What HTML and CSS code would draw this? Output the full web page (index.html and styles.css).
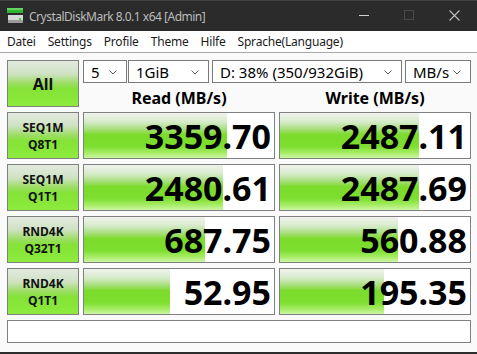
FILE: index.html
```html
<!DOCTYPE html>
<html lang="de">
  <head>
    <meta charset="UTF-8" />
    <meta name="viewport" content="width=device-width, initial-scale=1.0" />
    <title>CrystalDiskMark 8.0.1 x64 [Admin]</title>
    <link rel="stylesheet" href="styles.css">
  </head>

  <body>
    <div class="window">
      <div class="titlebar">
        <svg class="app-icon" width="16" height="17" viewBox="0 0 16 17">
          <rect x="0" y="1" width="16" height="5" fill="#2fb52f" />
          <rect x="0" y="1" width="16" height="2" fill="#5fd65f" />
          <rect x="1" y="8" width="15" height="8" fill="#d8d8d8" />
          <rect x="1" y="13" width="15" height="3" fill="#9a9a9a" />
          <rect x="12" y="11" width="2" height="2" fill="#3fcf3f" />
        </svg>
        <span class="title">CrystalDiskMark 8.0.1 x64 [Admin]</span>
        <div class="caption">
          <span class="cap-btn">
            <svg width="11" height="11" viewBox="0 0 11 11"><line x1="0" y1="5.5" x2="10" y2="5.5" stroke="#cfcfcf" stroke-width="1" /></svg>
          </span>
          <span class="cap-btn">
            <svg width="11" height="11" viewBox="0 0 11 11"><rect x="0.5" y="0.5" width="9" height="9" fill="none" stroke="#6a6a6a" stroke-width="1" stroke-dasharray="1 1" /></svg>
          </span>
          <span class="cap-btn">
            <svg width="11" height="11" viewBox="0 0 11 11"><path d="M0.5 0.5 L10.5 10.5 M10.5 0.5 L0.5 10.5" stroke="#bdbdbd" stroke-width="1.1" /></svg>
          </span>
        </div>
      </div>

      <div class="menubar">
        <span class="menu-item">Datei</span>
        <span class="menu-item">Settings</span>
        <span class="menu-item">Profile</span>
        <span class="menu-item">Theme</span>
        <span class="menu-item">Hilfe</span>
        <span class="menu-item">Sprache(Language)</span>
      </div>

      <div class="main">
        <div class="top">
          <div class="test-btn all">All</div>
          <div class="selects">
            <div class="combo count">5<svg class="chev" width="8" height="5" viewBox="0 0 8 5"><polyline points="0.5,0.5 4,4 7.5,0.5" fill="none" stroke="#606060" stroke-width="1" /></svg></div>
            <div class="combo size">1GiB<svg class="chev" width="8" height="5" viewBox="0 0 8 5"><polyline points="0.5,0.5 4,4 7.5,0.5" fill="none" stroke="#606060" stroke-width="1" /></svg></div>
            <div class="combo drive">D: 38% (350/932GiB)<svg class="chev" width="8" height="5" viewBox="0 0 8 5"><polyline points="0.5,0.5 4,4 7.5,0.5" fill="none" stroke="#606060" stroke-width="1" /></svg></div>
            <div class="combo unit">MB/s<svg class="chev" width="8" height="5" viewBox="0 0 8 5"><polyline points="0.5,0.5 4,4 7.5,0.5" fill="none" stroke="#606060" stroke-width="1" /></svg></div>
          </div>
          <div class="head">Read (MB/s)</div>
          <div class="head">Write (MB/s)</div>
        </div>

        <div class="results">
          <div class="test-btn">SEQ1M<br>Q8T1</div>
          <div class="value"><div class="bar" style="width: 143px"></div><span>3359.70</span></div>
          <div class="value"><div class="bar" style="width: 139px"></div><span>2487.11</span></div>

          <div class="test-btn">SEQ1M<br>Q1T1</div>
          <div class="value"><div class="bar" style="width: 139px"></div><span>2480.61</span></div>
          <div class="value"><div class="bar" style="width: 139px"></div><span>2487.69</span></div>

          <div class="test-btn">RND4K<br>Q32T1</div>
          <div class="value"><div class="bar" style="width: 121px"></div><span>687.75</span></div>
          <div class="value"><div class="bar" style="width: 118px"></div><span>560.88</span></div>

          <div class="test-btn">RND4K<br>Q1T1</div>
          <div class="value"><div class="bar" style="width: 86px"></div><span>52.95</span></div>
          <div class="value"><div class="bar" style="width: 104px"></div><span>195.35</span></div>

          <div class="comment"></div>
        </div>
      </div>
    </div>
  </body>
</html>
```

FILE: styles.css
```css
* {
  padding: 0;
  margin: 0;
  box-sizing: border-box;
}

body {
  width: 477px;
  height: 354px;
  overflow: hidden;
  font-family: "Noto Sans", "DejaVu Sans", sans-serif;
  background: #2b2b2b;
}

.window {
  width: 477px;
  height: 354px;
  display: flex;
  flex-direction: column;
  border-bottom: 2px solid #2d2d2d;
}

/* title bar */
.titlebar {
  height: 31px;
  background: #2b2b2b;
  border-top: 1px solid #404040;
  display: flex;
  align-items: center;
}

.app-icon {
  margin-left: 7px;
  margin-top: -2px;
}

.title {
  margin-left: 6px;
  font-size: 12px;
  color: #bcbcbc;
  letter-spacing: -0.5px;
}

.caption {
  margin-left: auto;
  display: flex;
  height: 100%;
}

.cap-btn {
  width: 45px;
  display: flex;
  justify-content: center;
  align-items: center;
  margin-top: -2px;
}

/* menu */
.menubar {
  height: 22px;
  background: #ffffff;
  border-bottom: 1px solid #a8a8a8;
  display: flex;
  align-items: center;
  padding-left: 1px;
}

.menu-item {
  font-size: 12px;
  color: #1a1a1a;
  padding: 0 6px;
  letter-spacing: -0.2px;
}

/* main area */
.main {
  flex: 1;
  background: #fafafa;
  padding: 7px 0 0 7px;
}

.top {
  display: grid;
  grid-template-columns: 72px 192px 192px;
  grid-template-rows: 23px 24px;
  column-gap: 4px;
}

.top .all {
  grid-row: 1 / 3;
  font-size: 16px;
}

.selects {
  grid-column: 2 / 4;
  display: flex;
}

.combo {
  height: 23px;
  background: #ffffff;
  border: 1px solid #7a7a7a;
  font-size: 15px;
  line-height: 20px;
  color: #000;
  padding-left: 7px;
  display: flex;
  align-items: center;
  justify-content: space-between;
  padding-right: 9px;
}

.combo.count {
  width: 44px;
}

.combo.size {
  width: 81px;
  margin-left: 1px;
}

.combo.drive {
  width: 190px;
  margin-left: 3px;
}

.combo.unit {
  width: 66px;
  margin-left: 3px;
}

.chev {
  margin-top: 1px;
}

.head {
  font-size: 16px;
  font-weight: bold;
  text-align: center;
  line-height: 20px;
  padding-top: 5px;
  color: #000;
}

.test-btn {
  border: 1px solid #808080;
  background: linear-gradient(to bottom, #e3eadf 0%, #cfe2c4 28%, #9bdd62 50%, #85e236 62%, #8ceb3c 100%);
  display: flex;
  justify-content: center;
  align-items: center;
  text-align: center;
  font-weight: bold;
  font-size: 12px;
  line-height: 17px;
  color: #111;
  padding-top: 1px;
}

.results {
  margin-top: 5px;
  display: grid;
  grid-template-columns: 72px 192px 192px;
  grid-template-rows: repeat(4, 47px) 23px;
  column-gap: 4px;
  row-gap: 5px;
}

.value {
  position: relative;
  border: 1px solid #808080;
  background: #ffffff;
  text-align: right;
}

.value .bar {
  position: absolute;
  left: 0;
  top: 0;
  bottom: 0;
  background: linear-gradient(to bottom, #f1f3ef 0%, #d6ebc9 20%, #a7df7c 36%, #7cdb2c 48%, #7cde2e 74%, #a4ec62 88%, #cdf6a6 100%);
}

.value span {
  position: relative;
  display: block;
  font-size: 34px;
  font-weight: bold;
  line-height: 42px;
  padding-top: 2px;
  padding-right: 3px;
  color: #000;
}

.comment {
  grid-column: 1 / 4;
  border: 1px solid #808080;
  background: #ffffff;
}
```
